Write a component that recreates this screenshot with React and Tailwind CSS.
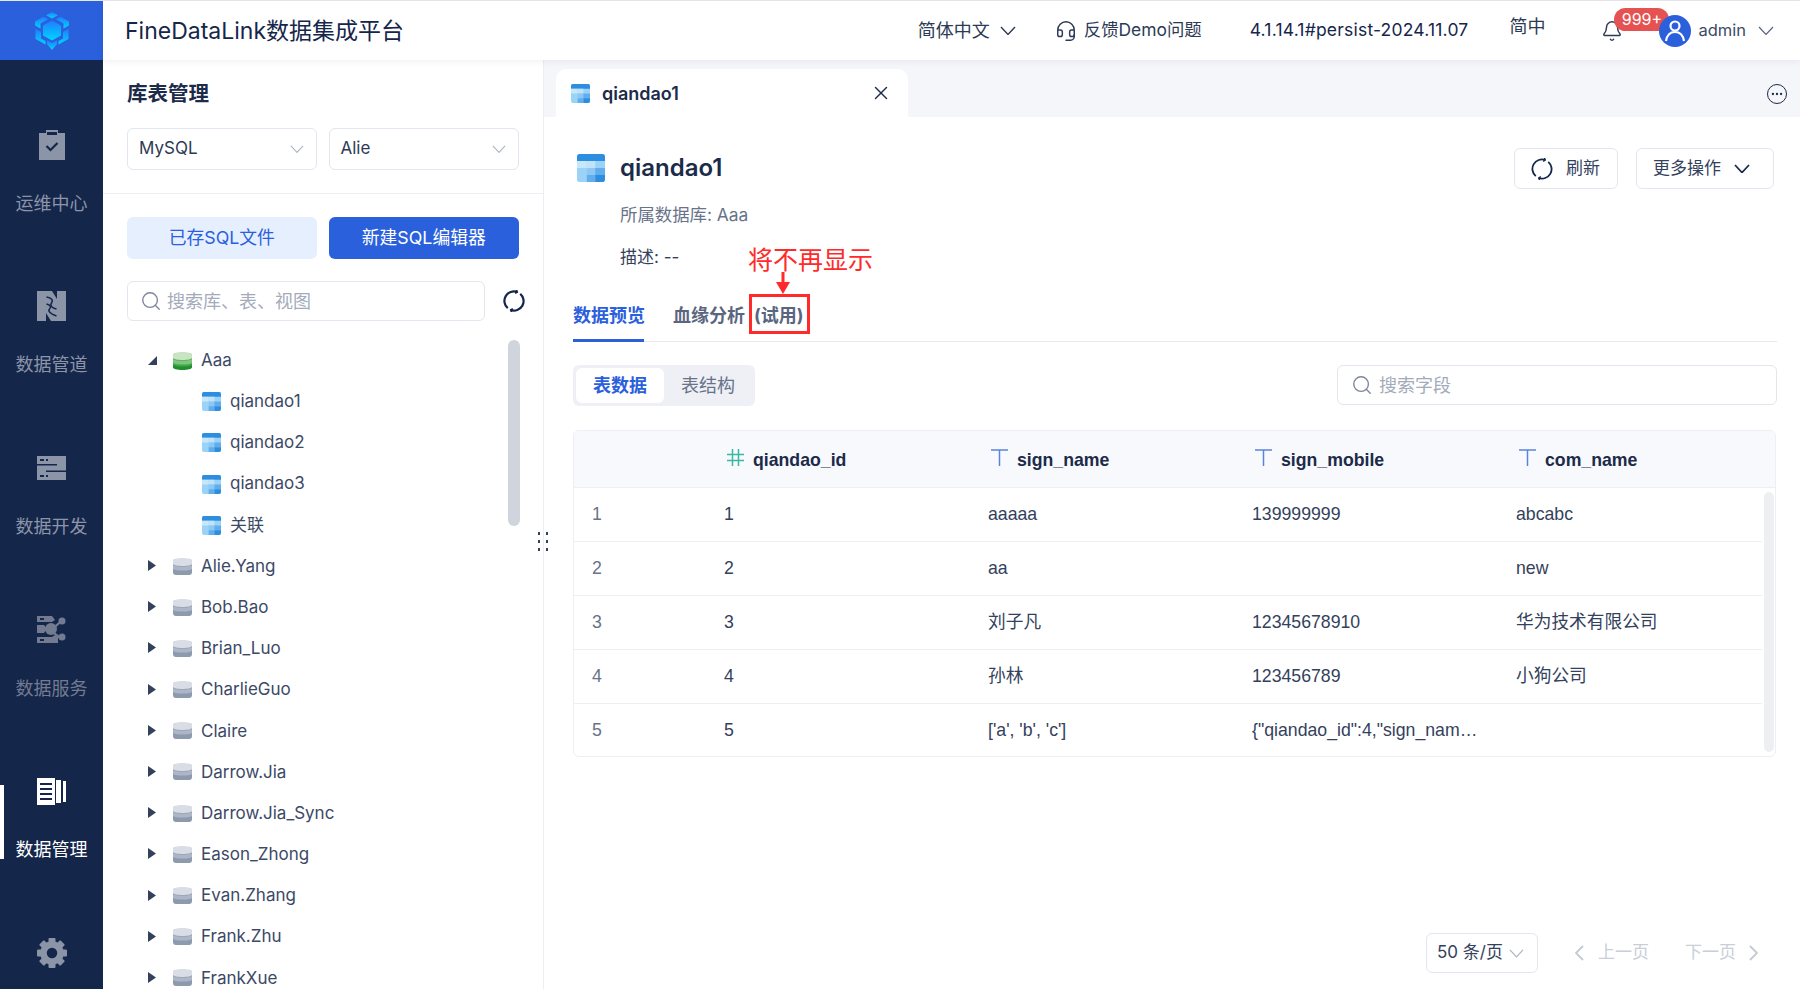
import { Search, X, Ellipsis, Bell, Headset } from 'lucide-react';

const cjk = { fontFamily: 'Inter, "Noto Sans CJK SC", sans-serif' };
const arial = { fontFamily: '"Liberation Sans", "Noto Sans CJK SC", sans-serif' };

const Logo = () => (
  <svg width="36" height="38" viewBox="0 0 36 38">
    <defs>
      <linearGradient id="logoGrad" x1="0" y1="0" x2="0" y2="1">
        <stop offset="0" stopColor="#1f7dff" />
        <stop offset="1" stopColor="#00d5ff" />
      </linearGradient>
    </defs>
    <g fill="url(#logoGrad)">
      <path d="M18 0l6 3.200-6 3.200-6-3.200z" />
      <path d="M9.500 4.800l4.500 2.400-7.500 4.300v5L1 13.500V9.500z" />
      <path d="M26.500 4.800l-4.500 2.400 7.500 4.300v5l5.500-3V9.500z" />
      <path d="M18 8.500l9 5v10l-9 5-9-5v-10z" />
      <path d="M1.500 17l5.500 3v6.500l4.500 2.500v3.500l-10-5.500z" />
      <path d="M34.500 17l-5.500 3v6.500l-4.500 2.500v3.500l10-5.500z" />
      <path d="M18 31l5-2.800v3.800L18 38l-5-6v-3.800z" />
    </g>
  </svg>
);

const Chev = ({ w = 16, color = '#2d3a55', sw = 1.4, className = '' }) => (
  <svg width={w} height={w * 0.6} viewBox="0 0 16 9.600" fill="none" stroke={color} strokeWidth={sw} className={`shrink-0 ${className}`}>
    <path d="M1 1l7 7.500L15 1" />
  </svg>
);

const PageChev = ({ left }) => (
  <svg width="9" height="16" viewBox="0 0 9 16" fill="none" stroke="#c3c9d4" strokeWidth="1.800" className="shrink-0">
    <path d={left ? 'M8 1L1 8l7 7' : 'M1 1l7 7-7 7'} />
  </svg>
);

const Spin = ({ size = 22, sw = 2.200 }) => (
  <svg width={size} height={size} viewBox="0 0 22 22" fill="none" stroke="#15264b" strokeWidth={sw} className="shrink-0">
    <g transform="rotate(35 11 11)">
      <path d="M8.500 1.800A9.500 9.500 0 0010 20.450" />
      <path d="M13.500 20.200A9.500 9.500 0 0012 1.550" />
      <path d="M6.500 0.500l2 1.300-1 2.200M15.500 21.500l-2-1.300 1-2.200" strokeWidth={sw * 0.8} />
    </g>
  </svg>
);

const ClipboardIcon = () => (
  <svg width="26" height="30" viewBox="0 0 26 30">
    <path d="M0 3h7V0h12v3h7v27H0z" fill="#8c94a8" />
    <rect x="8" y="2" width="10" height="3" fill="#15264b" />
    <path d="M7.500 16l4 4 7-7" fill="none" stroke="#15264b" strokeWidth="2.200" />
  </svg>
);

const PipeIcon = () => (
  <svg width="29" height="30" viewBox="0 0 29 30">
    <rect width="29" height="30" fill="#8c94a8" />
    <path d="M15 0h5v8z" fill="#15264b" />
    <path d="M9 30h5l-5-8z" fill="#15264b" />
    <path d="M9.500 6c5 1 7 3 5 6s1 5 5 6" fill="none" stroke="#15264b" strokeWidth="1.500" />
    <path d="M9.500 13c4 1 5 3 3 5s1 5 7 7" fill="none" stroke="#15264b" strokeWidth="1.500" />
  </svg>
);

const DevIcon = () => (
  <svg width="29" height="24" viewBox="0 0 29 24">
    <rect width="29" height="24" fill="#8c94a8" />
    <rect x="0" y="8" width="20" height="1.500" fill="#15264b" />
    <rect x="9" y="14.500" width="20" height="1.500" fill="#15264b" />
    <rect x="3" y="3" width="4" height="2" fill="#15264b" />
    <rect x="9" y="3" width="2" height="2" fill="#15264b" />
    <rect x="3" y="19" width="4" height="2" fill="#15264b" />
    <rect x="9" y="19" width="2" height="2" fill="#15264b" />
  </svg>
);

const ServiceIcon = () => (
  <svg width="29" height="27" viewBox="0 0 29 27" fill="#737b90">
    <path d="M0 0h15l3 4-3 2H0z" />
    <path d="M0 9h7l3 4-3 4H0z" />
    <path d="M0 21h15l3-2 3 2v6H0z" />
    <circle cx="14" cy="13" r="6" />
    <circle cx="25" cy="5" r="3.500" />
    <circle cx="25" cy="21" r="3.500" />
    <path d="M16 11l8-7 1 2-8 7zM16 15l8 6-1 2-8-6z" />
    <rect x="3" y="2" width="4" height="2" fill="#15264b" />
    <rect x="3" y="23" width="4" height="2" fill="#15264b" />
  </svg>
);

const ManageIcon = () => (
  <svg width="30" height="27" viewBox="0 0 30 27" fill="#fff">
    <rect x="0" y="0" width="18" height="27" />
    <rect x="3" y="5" width="12" height="2" fill="#15264b" />
    <rect x="3" y="10" width="12" height="2" fill="#15264b" />
    <rect x="3" y="15" width="12" height="2" fill="#15264b" />
    <rect x="3" y="20" width="12" height="2" fill="#15264b" />
    <rect x="19" y="2" width="5" height="23" />
    <rect x="26" y="3" width="3" height="21" />
  </svg>
);

const GearIcon = () => (
  <svg width="30" height="30" viewBox="0 0 30 30" fill="#8c94a8">
    {[0, 45, 90, 135, 180, 225, 270, 315].map((a) => (
      <rect key={a} x="11.500" y="0" width="7" height="7" rx="1" transform={`rotate(${a} 15 15)`} />
    ))}
    <circle cx="15" cy="15" r="8.500" fill="none" stroke="#8c94a8" strokeWidth="6.500" />
  </svg>
);

const TableIcon = ({ size = 19 }) => (
  <svg width={size} height={size} viewBox="0 0 20 20" className="shrink-0">
    <rect width="20" height="20" rx="2" fill="#9bd2f7" />
    <path d="M0 2a2 2 0 012-2h16a2 2 0 012 2v3H0z" fill="#2d8ee0" />
    <rect x="7" y="5" width="6" height="5" fill="#c0e3fa" />
    <rect x="0" y="5" width="7" height="5" fill="#c8e7fb" />
    <rect x="7" y="10" width="6" height="5" fill="#8cc8f4" />
    <rect x="13" y="10" width="7" height="5" fill="#62adeb" />
    <rect x="7" y="15" width="6" height="5" fill="#62adeb" />
    <path d="M13 15h7v3a2 2 0 01-2 2h-5z" fill="#2d8ee0" />
  </svg>
);

const DbIcon = ({ green }) => (
  <svg width="19" height="18" viewBox="0 0 19 18" className="shrink-0">
    <rect y="1" width="19" height="16" rx="3" fill={green ? '#3fa64a' : '#8d99ad'} />
    <path d="M0 3c0-2 4-3 9.500-3S19 1 19 3v3c0 1-4 2-9.500 2S0 7 0 6z" fill={green ? '#c8e4c3' : '#d9dde5'} />
    <path d="M0 7c2 1 5 1.500 9.500 1.500S17 8 19 7v4c-2 1-5 1.500-9.500 1.500S2 12 0 11z" fill={green ? '#7fc47c' : '#adb6c6'} />
    {green && <path d="M0 13c2 1 5 1.500 9.500 1.500S17 14 19 13v2c0 2-4 3-9.500 3S0 17 0 15z" fill="#1f8f2f" />}
  </svg>
);

const navItems = [
  { label: '运维中心', icon: <ClipboardIcon /> },
  { label: '数据管道', icon: <PipeIcon /> },
  { label: '数据开发', icon: <DevIcon /> },
  { label: '数据服务', icon: <ServiceIcon />, dim: true },
  { label: '数据管理', icon: <ManageIcon />, active: true },
];

const Sidebar = () => (
  <div className="w-[103px] shrink-0 h-full bg-[#15264b] flex flex-col items-stretch">
    <div className="h-[59px] shrink-0 bg-[#2b60dc] flex items-center justify-center">
      <Logo />
    </div>
    <div className="pt-[32px] flex flex-col">
      {navItems.map((item) => (
        <div key={item.label} className="relative h-[161.6px] flex flex-col items-center justify-center gap-[32px]">
          {item.active && <div className="absolute left-0 top-[47px] w-[4px] h-[74px] bg-white" />}
          <div className="h-[30px] flex items-center justify-center">{item.icon}</div>
          <div className={`text-[18px] leading-[24px] ${item.active ? 'text-white' : item.dim ? 'text-[#737b90]' : 'text-[#8c94a8]'}`}>{item.label}</div>
        </div>
      ))}
    </div>
    <div className="mt-[38px] flex justify-center">
      <GearIcon />
    </div>
  </div>
);

const Header = () => (
  <div className="relative z-10 h-[59px] shrink-0 bg-white flex items-center shadow-[0_2px_6px_rgba(30,40,70,0.06)] text-[#1c2b4a]">
    <div className="ml-[22px] text-[23px] leading-[32px] text-[#15264b]">FineDataLink数据集成平台</div>
    <div className="ml-auto flex items-center">
      <span className="text-[18px] text-[#2d3a55]">简体中文</span>
      <Chev className="ml-[10px]" />
      <Headset size={22} strokeWidth={1.6} className="ml-[39px] text-[#2d3a55]" />
      <span className="ml-[7px] text-[17.4px] text-[#2d3a55]">反馈Demo问题</span>
      <span className="ml-[48px] text-[17.5px] text-[#15264b] -mt-[1px] tracking-[0.2px]">4.1.14.1#persist-2024.11.07</span>
      <span className="ml-[41px] text-[18px] text-[#2d3a55] -mt-[9px]">简中</span>
      <div className="relative ml-[56px] w-[22px] h-[24px] flex items-center">
        <Bell size={22} strokeWidth={1.6} className="text-[#2d3a55]" />
        <span className="absolute left-[13px] top-[-11px] w-[55px] h-[23px] rounded-[12px] bg-[#e65251] text-white text-[16px] leading-[23px] text-center">999+</span>
      </div>
      <div className="relative ml-[36px] w-[32px] h-[32px] rounded-full bg-[#2b60dc] overflow-hidden">
        <svg width="32" height="32" viewBox="0 0 32 32" fill="none" stroke="#fff" strokeWidth="2.200">
          <circle cx="16" cy="11" r="4.500" />
          <path d="M7 26c1-6 4-9 9-9s8 3 9 9" />
        </svg>
      </div>
      <span className="ml-[7px] text-[16.5px] text-[#3c4a66]">admin</span>
      <Chev color="#5a6680" sw={1.2} className="ml-[12px] mr-[26px]" />
    </div>
  </div>
);

const treeNames = ['Alie.Yang', 'Bob.Bao', 'Brian_Luo', 'CharlieGuo', 'Claire', 'Darrow.Jia', 'Darrow.Jia_Sync', 'Eason_Zhong', 'Evan.Zhang', 'Frank.Zhu', 'FrankXue'];
const children = ['qiandao1', 'qiandao2', 'qiandao3', '关联'];

const TreeRow = ({ children: content }) => (
  <div className="h-[41.2px] shrink-0 flex items-center text-[17px] text-[#3b4966]">{content}</div>
);

const LeftPanel = () => (
  <div className="w-[441px] shrink-0 h-full bg-white border-r border-[#eceef3] relative overflow-hidden">
    <div className="px-[24px]">
      <div className="pt-[21px] h-[68px] text-[20.500px] leading-[26px] font-bold text-[#1c2b4a]">库表管理</div>
      <div className="flex gap-[12px]">
        {['MySQL', 'Alie'].map((v) => (
          <div key={v} className="w-[190px] last:w-[191px] h-[42px] border border-[#e3e6ee] rounded-[6px] flex items-center justify-between pl-[11px] pr-[12px] text-[17px] text-[#2d3a55]">
            {v}
            <Chev w={14} color="#aab2c2" sw={1.2} />
          </div>
        ))}
      </div>
    </div>
    <div className="mt-[23px] border-t border-[#eceef3]" />
    <div className="px-[24px] pt-[23px]">
      <div className="flex gap-[12px]">
        <div className="w-[190px] h-[42px] rounded-[6px] bg-[#e6effe] text-[#2b60dc] text-[17.800px] flex items-center justify-center">已存SQL文件</div>
        <div className="w-[191px] h-[42px] rounded-[6px] bg-[#2b60dc] text-white text-[17.800px] flex items-center justify-center">新建SQL编辑器</div>
      </div>
      <div className="mt-[22px] flex items-center">
        <div className="w-[358px] shrink-0 h-[40px] border border-[#e3e6ee] rounded-[6px] flex items-center pl-[12px] text-[18px] text-[#a3abbb]">
          <Search size={22} strokeWidth={1.5} className="text-[#7d879b]" />
          <span className="ml-[5px]">搜索库、表、视图</span>
        </div>
        <span className="ml-[18px]"><Spin /></span>
      </div>
    </div>
    <div className="flex pl-[45px] mt-[19px]">
      <div className="w-[355px] shrink-0 flex flex-col">
        <TreeRow>
          <svg width="9" height="9" viewBox="0 0 9 9" className="shrink-0"><path d="M9 0v9H0z" fill="#33415c" /></svg>
          <span className="ml-[16px]"><DbIcon green /></span>
          <span className="ml-[9px]">Aaa</span>
        </TreeRow>
        {children.map((c) => (
          <TreeRow key={c}>
            <span className="ml-[54px]"><TableIcon /></span>
            <span className="ml-[9px]">{c}</span>
          </TreeRow>
        ))}
        {treeNames.map((n) => (
          <TreeRow key={n}>
            <svg width="8" height="11" viewBox="0 0 8 11" className="shrink-0 -mt-[2px]"><path d="M0 0l8 5.500L0 11z" fill="#33415c" /></svg>
            <span className="ml-[17px]"><DbIcon /></span>
            <span className="ml-[9px]">{n}</span>
          </TreeRow>
        ))}
      </div>
      <div className="ml-[5px] w-[12px] h-[186px] rounded-[6px] bg-[#d0d4dc] shrink-0" />
    </div>
  </div>
);

const columns = [
  { name: 'qiandao_id', type: '#' },
  { name: 'sign_name', type: 'T' },
  { name: 'sign_mobile', type: 'T' },
  { name: 'com_name', type: 'T' },
];

const rows = [
  ['1', '1', 'aaaaa', '139999999', 'abcabc'],
  ['2', '2', 'aa', '', 'new'],
  ['3', '3', '刘子凡', '12345678910', '华为技术有限公司'],
  ['4', '4', '孙林', '123456789', '小狗公司'],
  ['5', '5', "['a', 'b', 'c']", '{"qiandao_id":4,"sign_nam…', ''],
];

const DataTable = () => (
  <div className="mt-[24px] w-[1203px] h-[327px] border border-[#edeff4] rounded-[6px] overflow-hidden flex flex-col" style={arial}>
    <div className="h-[57px] shrink-0 bg-[#f8f9fd] border-b border-[#edeff4] grid grid-cols-[150px_264px_264px_264px_1fr] items-center pt-[2px]">
      <div />
      {columns.map((col) => (
        <div key={col.name} className="flex items-center pl-[3px]">
          {col.type === '#' ? (
            <svg width="17" height="17" viewBox="0 0 17 17" className="-mt-[4px]" stroke="#3ab7a5" strokeWidth="1.500" fill="none">
              <path d="M5.500 0v17M11.500 0v17M0 5.500h17M0 11.500h17" />
            </svg>
          ) : (
            <svg width="17" height="17" viewBox="0 0 17 17" className="-mt-[4px]" stroke="#5b83dc" strokeWidth="1.500" fill="none">
              <path d="M0 1h17M8.500 1v16" />
            </svg>
          )}
          <span className="ml-[9px] text-[17.700px] font-bold text-[#1c2b4a]">{col.name}</span>
        </div>
      ))}
    </div>
    <div className="flex-1 flex min-h-0">
      <div className="w-[1188px] shrink-0">
        {rows.map((row, i) => (
          <div key={row[0]} className={`h-[54px] border-b grid grid-cols-[150px_264px_264px_264px_246px] items-center text-[17.700px] text-[#33415c] ${i < rows.length - 1 ? 'border-[#edeff4]' : 'border-transparent'}`}>
            <div className="pl-[18px] text-[#68738a]">{row[0]}</div>
            {row.slice(1).map((cell, j) => (
              <div key={j} className="whitespace-nowrap">{cell}</div>
            ))}
          </div>
        ))}
      </div>
      <div className="ml-[2px] my-[4px] w-[10px] rounded-[5px] bg-[#eeeff3]" />
    </div>
  </div>
);

const MainPanel = () => (
  <div className="flex-1 min-w-0 h-full flex flex-col">
    <div className="h-[57px] shrink-0 bg-[#f5f6fa] pt-[9px] pl-[12px] pr-[13px] flex">
      <div className="w-[352px] h-[48px] bg-white rounded-t-[10px] flex items-center pl-[15px] pr-[16px]">
        <TableIcon />
        <span className="ml-[12px] text-[18px] font-semibold text-[#1c2b4a]">qiandao1</span>
        <X size={22} strokeWidth={1.5} className="ml-auto text-[#1c2b4a]" />
      </div>
      <div className="ml-auto mt-[15px]">
        <div className="w-[20px] h-[20px] rounded-full border-[1.5px] border-[#1c2b4a] flex items-center justify-center">
          <Ellipsis size={14} strokeWidth={2} className="text-[#1c2b4a]" />
        </div>
      </div>
    </div>
    <div className="relative flex-1 bg-white pl-[29px] pr-[23px] flex flex-col">
      <div className="pt-[31px] flex items-start">
        <div className="flex items-center pl-[4px] h-[40px]">
          <TableIcon size={28} />
          <span className="ml-[15px] text-[24px] font-semibold text-[#1c2b4a]">qiandao1</span>
        </div>
        <div className="ml-auto mr-[3px] flex gap-[18px]">
          <div className="w-[104px] h-[41px] border border-[#e3e6ee] rounded-[6px] flex items-center pl-[16px] text-[17px] text-[#33415c]">
            <Spin size={22} sw={1.800} />
            <span className="ml-[13px]">刷新</span>
          </div>
          <div className="w-[138px] h-[41px] border border-[#e3e6ee] rounded-[6px] flex items-center pl-[16px] text-[17px] text-[#33415c]">
            更多操作
            <Chev color="#1c2b4a" sw={1.800} className="ml-[13px]" />
          </div>
        </div>
      </div>
      <div className="ml-[47px] mt-[14px] text-[17.400px] leading-[24px] text-[#68738a]">所属数据库: Aaa</div>
      <div className="ml-[47px] mt-[18px] text-[17px] leading-[24px] text-[#33415c]">描述: --</div>

      <div className="mt-[28px] h-[45px] border-b border-[#e8eaf0] flex items-start w-full">
        <div className="h-[45px] w-[71px] border-b-[3px] border-[#2b60dc] text-[#2b60dc] text-[18px] leading-[38px] font-bold whitespace-nowrap">数据预览</div>
        <div className="ml-[29px] text-[18px] leading-[38px] font-bold text-[#5a6680] whitespace-nowrap">血缘分析</div>
        <div className="ml-[9px] text-[18px] leading-[38px] font-bold text-[#5a6680] whitespace-nowrap">(试用)</div>
      </div>

      <div className="mt-[23px] flex items-start">
        <div className="w-[182px] h-[41px] rounded-[6px] bg-[#eef0f5] p-[3px] flex text-[18px]">
          <div className="w-[88px] h-[35px] rounded-[6px] bg-white text-[#2b60dc] font-bold flex items-center justify-center">表数据</div>
          <div className="w-[88px] h-[35px] text-[#68738a] flex items-center justify-center">表结构</div>
        </div>
        <div className="ml-auto w-[440px] h-[40px] border border-[#e3e6ee] rounded-[6px] flex items-center pl-[13px] text-[18px] text-[#a3abbb]">
          <Search size={22} strokeWidth={1.5} className="text-[#7d879b]" />
          <span className="ml-[6px]">搜索字段</span>
        </div>
      </div>

      <DataTable />

      <div className="absolute right-[42px] bottom-[16px] flex items-center text-[#c9ced8] text-[17px]">
        <div className="w-[112px] h-[40px] border border-[#e3e6ee] rounded-[6px] flex items-center pl-[10px] text-[#33415c]">
          50 条/页
          <Chev w={15} color="#aab2c2" sw={1.200} className="ml-[6px]" />
        </div>
        <span className="ml-[37px]"><PageChev left /></span>
        <span className="ml-[14px]">上一页</span>
        <span className="ml-[36px]">下一页</span>
        <span className="ml-[13px]"><PageChev /></span>
      </div>

      <div className="absolute left-[204px] top-[127px] text-[25px] leading-[32px] text-[#ff2a2a] whitespace-nowrap">将不再显示</div>
      <svg width="14" height="22" viewBox="0 0 14 22" className="absolute left-[232px] top-[155px]">
        <path d="M5.500 0h3v10H14l-7 12-7-12h5.500z" fill="#ff2a2a" />
      </svg>
      <div className="absolute left-[205px] top-[177px] w-[61px] h-[40px] border-[3px] border-[#ff2a2a]" />
    </div>
  </div>
);

export default function App() {
  return (
    <div className="w-full h-screen overflow-hidden flex flex-col bg-white" style={cjk}>
      <div className="h-px bg-[#e5e7eb] shrink-0" />
      <div className="flex-1 min-h-0 flex">
        <Sidebar />
        <div className="flex-1 min-w-0 flex flex-col">
          <Header />
          <div className="flex-1 min-h-0 flex relative">
            <LeftPanel />
            <MainPanel />
            <div className="absolute left-[435px] top-[472px] grid grid-cols-2 gap-x-[6px] gap-y-[5px]">
              {[0, 1, 2, 3, 4, 5].map((d) => (
                <span key={d} className="w-[2px] h-[3px] bg-[#33415c]" />
              ))}
            </div>
          </div>
        </div>
      </div>
    </div>
  );
}
